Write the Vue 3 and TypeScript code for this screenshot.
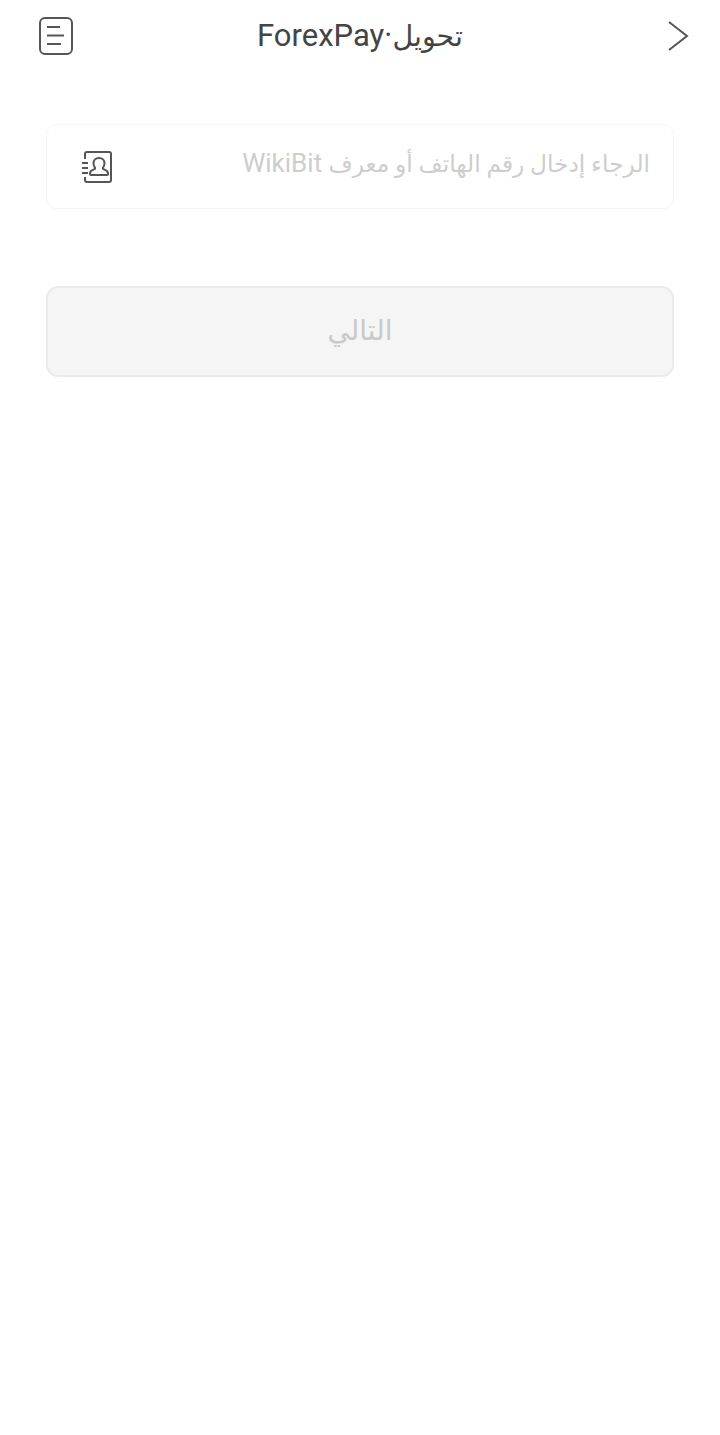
<script setup lang="ts">
import { ref } from 'vue';

const account = ref('');
</script>

<template>
  <div class="page">
    <header class="topbar">
      <button class="icon-btn records" aria-label="records">
        <svg width="34" height="38" viewBox="0 0 34 38" fill="none" stroke="#555555" stroke-width="2">
          <rect x="1" y="1" width="32" height="36" rx="5" />
          <path d="M8 10h13M8 18.500h17M8 27h14" />
        </svg>
      </button>
      <h1 class="title" dir="rtl">
        <span class="title-ar">تحويل</span><span class="title-en" dir="ltr">ForexPay·</span>
      </h1>
      <button class="icon-btn back" aria-label="back">
        <svg width="22" height="32" viewBox="0 0 22 32" fill="none" stroke="#555555" stroke-width="2">
          <path d="M2 2l18 14L2 30" />
        </svg>
      </button>
    </header>

    <main class="form">
      <div class="field">
        <svg class="contacts" width="32" height="34" viewBox="0 0 32 34" fill="none" stroke="#555555" stroke-width="2">
          <path d="M3 9V4a2 2 0 0 1 2-2h22a2 2 0 0 1 2 2v26a2 2 0 0 1-2 2H5a2 2 0 0 1-2-2v-3" />
          <path d="M0 13h6M0 18h6M0 23h6" />
          <path d="M17 8c-3.400 0-5.500 2.300-5.500 5.300 0 2 .8 3.400 1.500 4.400.5 1-.5 1.700-2 2.200-2 .7-3 1.500-3 3.600v.5a1 1 0 0 0 1 1h16a1 1 0 0 0 1-1v-.5c0-2.100-1-2.900-3-3.600-1.500-.5-2.500-1.200-2-2.200.7-1 1.500-2.400 1.500-4.400C22.500 10.300 20.400 8 17 8z" />
        </svg>
        <label class="entry">
          <span v-if="!account" class="hint" dir="rtl">
            <span class="hint-ar">الرجاء إدخال رقم الهاتف أو معرف</span> <span dir="ltr">WikiBit</span>
          </span>
          <input v-model="account" class="input" dir="rtl" />
        </label>
      </div>

      <button class="next" disabled>التالي</button>
    </main>
  </div>
</template>

<style scoped>
.page {
  min-height: 1435px;
  background: #ffffff;
  font-family: Roboto, "Noto Sans", "DejaVu Sans", sans-serif;
  display: flex;
  flex-direction: column;
}

.topbar {
  height: 72px;
  padding: 0 31px 0 39px;
  display: grid;
  grid-template-columns: 1fr auto 1fr;
  align-items: center;
}

.icon-btn {
  border: 0;
  padding: 0;
  background: none;
  display: flex;
}

.back {
  justify-self: end;
}

.title {
  margin: 0 4px 2px 0;
  font-size: 31px;
  font-weight: 400;
  color: #444444;
  white-space: nowrap;
}

.title-ar {
  font-size: 28.500px;
  margin-right: 4px;
}

.form {
  padding: 52px 46px 0;
  display: flex;
  flex-direction: column;
  gap: 77px;
}

.field {
  height: 85px;
  box-sizing: border-box;
  border: 1px solid #f5f5f5;
  border-radius: 10px;
  padding: 0 23px 8px 35px;
  display: flex;
  align-items: center;
  gap: 20px;
}

.contacts {
  margin-top: 8px;
}

.entry {
  flex: 1;
  min-width: 0;
  position: relative;
  display: flex;
  align-items: center;
  height: 40px;
}

.hint {
  position: absolute;
  right: 0;
  top: 0;
  line-height: 40px;
  font-size: 26px;
  color: #cdcdcd;
  white-space: nowrap;
}

.hint-ar {
  font-size: 23.300px;
}

.input {
  width: 100%;
  position: relative;
  border: 0;
  outline: 0;
  background: none;
  font: inherit;
  font-size: 26px;
}

.next {
  height: 91px;
  border: 2px solid #ebebeb;
  border-radius: 12px;
  background: #f5f5f5;
  color: #c9c9c9;
  font: inherit;
  font-size: 28px;
  padding-bottom: 4px;
}
</style>
